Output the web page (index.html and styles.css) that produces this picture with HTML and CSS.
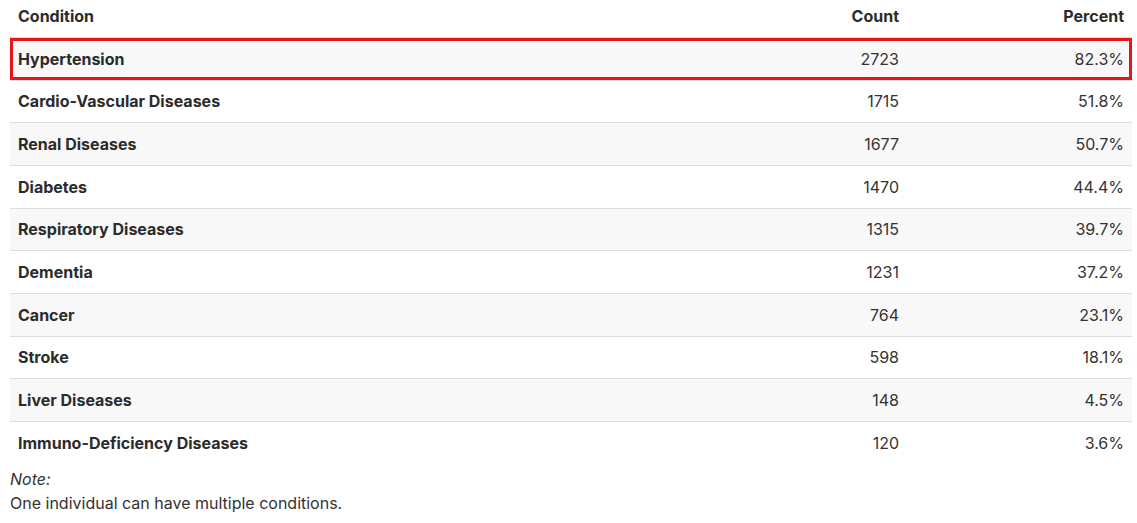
FILE: index.html
```html
<!DOCTYPE html>
<html>
<head>
<meta charset="utf-8">
<link rel="stylesheet" href="styles.css">
</head>
<body>
<div class="wrap">
  <table class="tbl">
    <thead>
      <tr>
        <th class="c-name">Condition</th>
        <th class="c-num">Count</th>
        <th class="c-pct">Percent</th>
      </tr>
    </thead>
    <tbody>
      <tr class="hl"><td class="c-name">Hypertension</td><td class="c-num">2723</td><td class="c-pct">82.3%</td></tr>
      <tr><td class="c-name">Cardio-Vascular Diseases</td><td class="c-num">1715</td><td class="c-pct">51.8%</td></tr>
      <tr><td class="c-name">Renal Diseases</td><td class="c-num">1677</td><td class="c-pct">50.7%</td></tr>
      <tr><td class="c-name">Diabetes</td><td class="c-num">1470</td><td class="c-pct">44.4%</td></tr>
      <tr><td class="c-name">Respiratory Diseases</td><td class="c-num">1315</td><td class="c-pct">39.7%</td></tr>
      <tr><td class="c-name">Dementia</td><td class="c-num">1231</td><td class="c-pct">37.2%</td></tr>
      <tr><td class="c-name">Cancer</td><td class="c-num">764</td><td class="c-pct">23.1%</td></tr>
      <tr><td class="c-name">Stroke</td><td class="c-num">598</td><td class="c-pct">18.1%</td></tr>
      <tr><td class="c-name">Liver Diseases</td><td class="c-num">148</td><td class="c-pct">4.5%</td></tr>
      <tr><td class="c-name">Immuno-Deficiency Diseases</td><td class="c-num">120</td><td class="c-pct">3.6%</td></tr>
    </tbody>
  </table>
  <div class="note">
    <div class="note-label">Note:</div>
    <div class="note-text">One individual can have multiple conditions.</div>
  </div>
</div>
</body>
</html>
```
FILE: styles.css
```css
html, body {
  margin: 0;
  padding: 0;
  background: #ffffff;
}
body {
  font-family: Inter, Roboto, "Liberation Sans", sans-serif;
  font-size: 16px;
  color: #333333;
}
.wrap {
  padding: 0 5px 0 10px;
}
.tbl {
  width: 1122px;
  border-collapse: collapse;
  table-layout: fixed;
}
.tbl th {
  font-weight: 700;
  line-height: 24px;
  padding: 4px 8px 9px 8px;
  color: #2b2b2b;
}
.tbl td {
  line-height: 24px;
  padding: 8.83px 8px;
  border-top: 1px solid #dddddd;
}
.tbl td.c-name {
  font-weight: 700;
  color: #2b2b2b;
}
.c-name { text-align: left; }
.c-num { text-align: right; width: 209px; }
.c-pct { text-align: right; width: 209px; }
.tbl tbody tr:nth-child(odd) {
  background: #f8f8f8;
}
.tbl tbody tr.hl {
  outline: 3px solid #e8141c;
  outline-offset: -3px;
}
.note {
  padding-top: 3px;
  line-height: 24px;
}
.note-label {
  font-style: italic;
}
```
